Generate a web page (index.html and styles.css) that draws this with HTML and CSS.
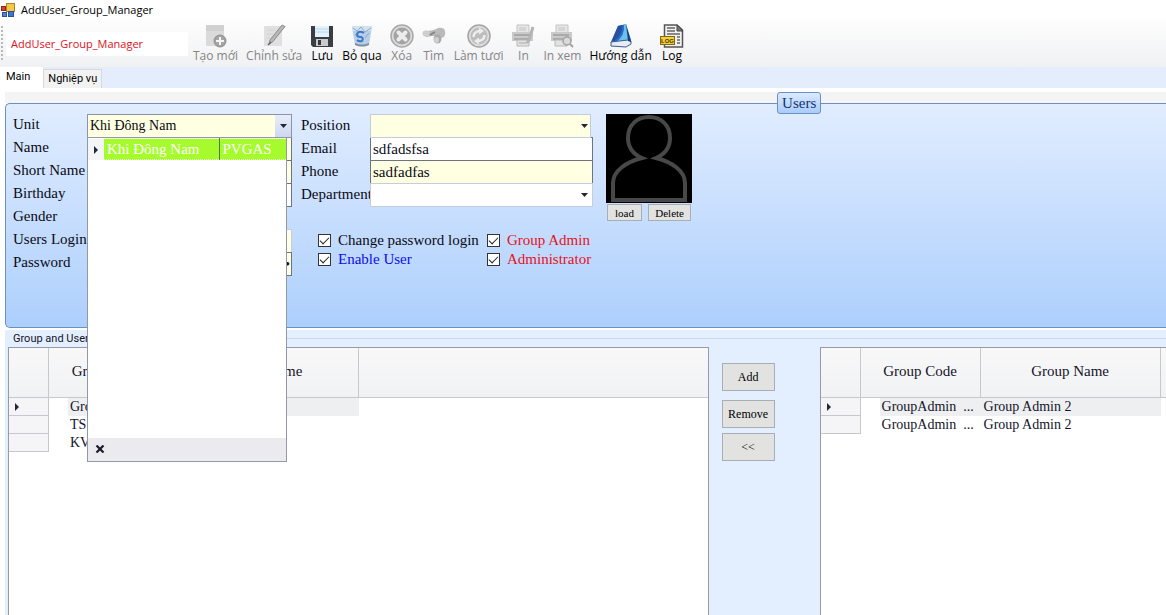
FILE: index.html
```html
<!DOCTYPE html>
<html lang="vi">
<head>
<meta charset="utf-8">
<title>AddUser_Group_Manager</title>
<link rel="stylesheet" href="styles.css">
</head>
<body>
<header class="titlebar">
  <svg class="app-icon" width="14" height="14" viewBox="0 0 14 14" aria-hidden="true">
    <rect x="5.5" y=".5" width="8" height="8" fill="#f6c843" stroke="#a8862c"/>
    <rect x=".5" y="3.5" width="4" height="4" fill="#d8402c" stroke="#96261a"/>
    <rect x="1.500" y="9.500" width="4" height="4" fill="#4c86dc" stroke="#2b5298"/>
    <rect x="7.500" y="8.500" width="5" height="5" fill="#3f74cf" stroke="#2b5298"/>
  </svg>
  <h1 class="app-title">AddUser_Group_Manager</h1>
</header>

<div class="toolbar" role="toolbar">
  <span class="grip"></span>
  <span class="form-name">AddUser_Group_Manager</span>
  <div class="tools">
    <button class="tool" type="button" disabled>
      <svg class="tool-icon" viewBox="0 0 24 24"><rect x="2" y="1" width="18" height="21" rx="1" fill="#dadada"/><rect x="2" y="1" width="18" height="6" fill="#d0d0d0"/><circle cx="16" cy="17" r="6.500" fill="#989898"/><circle cx="16" cy="17" r="5" fill="#a6a6a6"/><path d="M16 13v8M12 17h8" stroke="#f5f5f5" stroke-width="2"/></svg>
      <span>Tạo mới</span>
    </button>
    <button class="tool" type="button" disabled>
      <svg class="tool-icon" viewBox="0 0 24 24"><path d="M2 2h18v20H2z" fill="#e0e0e0"/><path d="M5 6h8M5 10h6M5 14h4" stroke="#d2d2d2"/><path d="M7 20l1-4L20 1l3 1.500L10.500 18z" fill="#b8b8b8" stroke="#8c8c8c"/><path d="M6 21l3-3" stroke="#666" stroke-width="1.500"/></svg>
      <span>Chỉnh sửa</span>
    </button>
    <button class="tool" type="button">
      <svg class="tool-icon" viewBox="0 0 24 24"><path d="M1 2h22v21H3l-2-2z" fill="#3a3d42"/><rect x="5" y="2" width="14" height="11" fill="#e3f2fc"/><path d="M5 5h14M5 8h14" stroke="#b9d8ee"/><rect x="6" y="15" width="12" height="7" fill="#c9cacc"/><rect x="8" y="16" width="3" height="5" fill="#33363b"/></svg>
      <span>Lưu</span>
    </button>
    <button class="tool" type="button">
      <svg class="tool-icon" viewBox="0 0 24 24"><path d="M2 3h20l-3 18q-7 3-14 0z" fill="#b7cfe6"/><path d="M2 2h20l-1 5H3z" fill="#d3e2ee"/><path d="M3 4l4 3 4-4 4 5 6-4M5 10l3 4M19 9l-4 5" stroke="#8aa9c6" fill="none"/><path d="M14 9q-5-3-7 1 0 3 4 3 3 1 1 4-3 1-5-1" stroke="#3a76cc" stroke-width="2" fill="none"/><path d="M5 19q7 3 14 0v2q-7 3-14 0z" fill="#83909e"/></svg>
      <span>Bỏ qua</span>
    </button>
    <button class="tool" type="button" disabled>
      <svg class="tool-icon" viewBox="0 0 24 24"><circle cx="12" cy="12" r="11" fill="#dcdcdc" stroke="#a8a8a8" stroke-width="1.500"/><circle cx="12" cy="12" r="8.500" fill="#a4a4a4"/><path d="M8.500 8.500l7 7M15.500 8.500l-7 7" stroke="#ececec" stroke-width="4" stroke-linecap="round"/></svg>
      <span>Xóa</span>
    </button>
    <button class="tool" type="button" disabled>
      <svg class="tool-icon" viewBox="0 0 24 24"><path d="M1 8q1-2 5-1l6-1 4-2q6-1 7 3 1 3-1 6l-3 1-6-2-3 0-6 1q-3-2-3-5z" fill="#bababa"/><ellipse cx="4" cy="9.500" rx="3.500" ry="3" fill="#cecece"/><ellipse cx="15.500" cy="15" rx="4" ry="4.500" fill="#aaa"/><ellipse cx="14.500" cy="16" rx="2.500" ry="3" fill="#cfcfcf"/><path d="M8 11l5-3" stroke="#858585" stroke-width="2"/></svg>
      <span>Tìm</span>
    </button>
    <button class="tool" type="button" disabled>
      <svg class="tool-icon" viewBox="0 0 24 24"><circle cx="12" cy="12" r="11" fill="#dedede" stroke="#a4a4a4" stroke-width="1.500"/><circle cx="12" cy="12" r="8.500" fill="#bdbdbd"/><path d="M6.500 13q0-5 6-6M17.500 11q0 5-6 6" stroke="#ededed" stroke-width="2.500" fill="none"/><path d="M12 3.500l5 3.500-5 3.500zM12 13.500L7 17l5 3.500z" fill="#ededed"/></svg>
      <span>Làm tươi</span>
    </button>
    <button class="tool" type="button" disabled>
      <svg class="tool-icon" viewBox="0 0 24 24"><path d="M6 1h12v9H6z" fill="#e6e6e6" stroke="#c4c4c4"/><path d="M8 4h7M8 6h7" stroke="#c4c4c4"/><path d="M1 8h21v9H1z" fill="#cacaca"/><path d="M3 11h16M3 15h16" stroke="#a0a0a0" stroke-width="1.500"/><path d="M6 16h12v6H6z" fill="#e2e2e2" stroke="#b8b8b8"/><path d="M8 19h8" stroke="#aaa"/><path d="M22 3l-4 13-2 3" stroke="#b4b4b4" stroke-width="3" fill="none"/></svg>
      <span>In</span>
    </button>
    <button class="tool" type="button" disabled>
      <svg class="tool-icon" viewBox="0 0 24 24"><path d="M6 1h12v9H6z" fill="#e6e6e6" stroke="#c4c4c4"/><path d="M8 4h7M8 6h7" stroke="#c4c4c4"/><path d="M1 8h21v9H1z" fill="#cacaca"/><path d="M3 11h16M3 15h16" stroke="#a0a0a0" stroke-width="1.500"/><path d="M5 16h12v6H5z" fill="#e2e2e2" stroke="#b8b8b8"/><circle cx="17" cy="17" r="4" fill="#dadada" stroke="#a2a2a2" stroke-width="1.500"/><path d="M20 20l3 3" stroke="#a2a2a2" stroke-width="2"/></svg>
      <span>In xem</span>
    </button>
    <button class="tool" type="button">
      <svg class="tool-icon" viewBox="0 0 24 24"><path d="M9 2l8-2 3 17-18 2z" fill="#2370c6"/><path d="M9 2l4-1q1 10-8 16l-3 1z" fill="#2a4fa0"/><path d="M15 1l2-1 3 16-13 2q9-6 8-17z" fill="#6cc0ee"/><path d="M2 18l17-2 3 1v3l-5 3-15-1z" fill="#e8edf3" stroke="#3a5f95"/><path d="M17 0l5 16v2l-3-1z" fill="#17427f"/></svg>
      <span>Hướng dẫn</span>
    </button>
    <button class="tool" type="button">
      <svg class="tool-icon" viewBox="0 0 24 24"><path d="M4.500 1H17l5.500 5v17h-18z" fill="#f0f0f0" stroke="#555" stroke-width="1.500"/><path d="M17 1v6h6z" fill="#777" stroke="#444"/><path d="M7 4h8M7 7h8M7 10h13M17 13h3M17 16h3M17 19h3" stroke="#666" stroke-width="1.500"/><rect x=".5" y="12.500" width="14" height="8" fill="#f4cf3a" stroke="#806710"/><text class="log-text" x="1" y="19">LOG</text></svg>
      <span>Log</span>
    </button>
  </div>
</div>

<nav class="tabs" role="tablist">
  <button class="tab tab-active" type="button" role="tab" aria-selected="true">Main</button>
  <button class="tab" type="button" role="tab" aria-selected="false">Nghiệp vụ</button>
</nav>

<main class="page">
  <section class="users" aria-labelledby="users-caption">
    <h2 class="users-caption" id="users-caption">Users</h2>
    <div class="users-body">
      <div class="fields fields-left">
        <label for="unit">Unit</label>
        <div class="combo combo-open">
          <select class="field cream" id="unit"><option>Khi Đông Nam</option></select>
          <span class="drop-button"><svg width="7" height="4" viewBox="0 0 7 4"><path d="M0 0h7L3.500 4z" fill="#24243a"/></svg></span>
          <div class="popup">
            <table class="popup-table">
              <tr><td class="popup-mark"><svg width="4" height="8" viewBox="0 0 4 8"><path d="M0 0l4 4-4 4z" fill="#24243a"/></svg></td><td class="popup-name">Khi Đông Nam</td><td class="popup-code">PVGAS</td></tr>
            </table>
            <div class="popup-footer"><button class="popup-close" type="button" aria-label="Close"><svg width="10" height="8" viewBox="0 0 10 8"><path d="M1.500.5l7 7M8.500.5l-7 7" stroke="#1b1b2c" stroke-width="2.200"/></svg></button></div>
          </div>
        </div>
        <label for="name">Name</label><input class="field cream" id="name" type="text">
        <label for="short">Short Name</label><input class="field cream" id="short" type="text">
        <label for="birthday">Birthday</label><input class="field" id="birthday" type="text">
        <label for="gender">Gender</label><select class="field gender" id="gender"><option></option></select>
        <label for="login">Users Login</label><input class="field cream pale" id="login" type="text">
        <label for="password">Password</label><input class="field cream password" id="password" type="password" value="aaaaaaaaaa">
      </div>

      <div class="column">
        <div class="fields fields-right">
          <label for="position">Position</label>
          <div class="combo combo-short"><select class="field cream pale" id="position"><option></option></select><svg class="caret" width="7" height="4" viewBox="0 0 7 4"><path d="M0 0h7L3.500 4z" fill="#24243a"/></svg></div>
          <label for="email">Email</label><input class="field" id="email" type="text" value="sdfadsfsa">
          <label for="phone">Phone</label><input class="field cream" id="phone" type="text" value="sadfadfas">
          <label for="department">Department</label>
          <div class="combo"><select class="field pale" id="department"><option></option></select><svg class="caret" width="7" height="4" viewBox="0 0 7 4"><path d="M0 0h7L3.500 4z" fill="#24243a"/></svg></div>
        </div>
        <div class="checks">
          <label class="check"><input type="checkbox" checked>Change password login</label>
          <label class="check red"><input type="checkbox" checked>Group Admin</label>
          <label class="check blue"><input type="checkbox" checked>Enable User</label>
          <label class="check red"><input type="checkbox" checked>Administrator</label>
        </div>
      </div>

      <div class="photo">
        <svg class="portrait" width="86" height="89" viewBox="0 0 86 89" role="img" aria-label="User photo">
          <rect width="86" height="89" fill="#000"/>
          <path d="M7 86V69C7 57 20 48 36 44C27 40 22 33 22 24C22 11 31 3 43 3S64 11 64 24C64 33 59 40 50 44C66 48 79 57 79 69V86z" fill="none" stroke="#484848" stroke-width="4"/>
        </svg>
        <div class="photo-buttons">
          <button class="button small-button" type="button">load</button>
          <button class="button small-button" type="button">Delete</button>
        </div>
      </div>
    </div>
  </section>

  <section class="groups">
    <h2 class="groups-caption">Group and Users</h2>
    <div class="groups-body">
      <div class="grid">
        <table class="grid-table">
          <colgroup><col class="c-mark"><col class="c-code"><col class="c-name"><col></colgroup>
          <thead><tr><th></th><th>Group Code</th><th>Group Name</th><th></th></tr></thead>
          <tbody>
            <tr class="selected"><td class="mark"><svg width="4" height="8" viewBox="0 0 4 8"><path d="M0 0l4 4-4 4z" fill="#24243a"/></svg></td><td class="code"><span>GroupAdmin  ...</span></td><td class="gname"></td><td></td></tr>
            <tr><td class="mark"></td><td class="code"><span>TS</span></td><td class="gname"></td><td></td></tr>
            <tr><td class="mark"></td><td class="code"><span>KV</span></td><td class="gname"></td><td></td></tr>
          </tbody>
        </table>
      </div>
      <div class="transfer">
        <button class="button add" type="button">Add</button>
        <button class="button" type="button">Remove</button>
        <button class="button" type="button">&lt;&lt;</button>
      </div>
      <div class="grid grid-right">
        <table class="grid-table">
          <colgroup><col class="c-mark"><col class="c-code"><col class="c-gname"><col></colgroup>
          <thead><tr><th></th><th>Group Code</th><th>Group Name</th><th></th></tr></thead>
          <tbody>
            <tr class="selected"><td class="mark"><svg width="4" height="8" viewBox="0 0 4 8"><path d="M0 0l4 4-4 4z" fill="#24243a"/></svg></td><td class="code"><span>GroupAdmin  ...</span></td><td class="gname">Group Admin 2</td><td></td></tr>
            <tr><td class="mark"></td><td class="code"><span>GroupAdmin  ...</span></td><td class="gname">Group Admin 2</td><td></td></tr>
          </tbody>
        </table>
      </div>
    </div>
  </section>
</main>
</body>
</html>
```
FILE: styles.css
```css
* { box-sizing: border-box; }

body {
  margin: 0;
  height: 100vh;
  overflow: hidden;
  display: flex;
  flex-direction: column;
  background: #fff;
  color: #14142a;
  font: 15px/18px "Liberation Serif", serif;
}

button, input, select { font: inherit; color: inherit; margin: 0; }
h1, h2 { margin: 0; font-weight: normal; }

.titlebar {
  display: flex;
  align-items: center;
  gap: 6px;
  height: 20px;
  padding-left: 1px;
}
.app-title { font: 11px/16px "Open Sans", sans-serif; color: #000; }

.toolbar {
  display: flex;
  align-items: center;
  height: 47px;
  background: linear-gradient(#fdfdfd, #f0f1f3);
  font: 12px/16px "Open Sans", sans-serif;
}
.grip {
  width: 2px;
  height: 36px;
  margin-left: 1px;
  background: repeating-linear-gradient(#b8b8b8 0 2px, transparent 2px 4px);
}
.form-name {
  width: 182px;
  margin-left: 3px;
  padding: 4px 5px;
  background: #fff;
  color: #e01020;
  font-size: 11px;
}
.tools { display: flex; gap: 8px; margin-left: 5px; }
.tool {
  display: flex;
  flex-direction: column;
  align-items: center;
  min-width: 24px;
  padding: 0;
  border: 0;
  background: none;
  color: #000;
  white-space: nowrap;
}
.tool:disabled { color: #858585; }
.tool-icon { width: 24px; height: 24px; }
.log-text { font: bold 6px "Liberation Sans", sans-serif; fill: #4a3905; }

.tabs {
  display: flex;
  align-items: flex-end;
  height: 21px;
  background: #e3edfb;
  font: 11px/16px Roboto, sans-serif;
}
.tab {
  height: 19px;
  padding: 1px 4px;
  border: 1px solid #d9d9d9;
  border-bottom: 0;
  background: #f2f2f2;
  color: #000;
}
.tab-active {
  height: 21px;
  padding: 0 13px 2px 6px;
  border: 0;
  background: #fff;
}

.page { flex: 1; display: flex; flex-direction: column; padding: 4px 0 0 5px; min-height: 0; }

.users { position: relative; padding-top: 11px; background: linear-gradient(#f4f4f4 11px, #fff 11px); }
.users-caption {
  position: absolute;
  top: 0;
  left: 66.5%;
  padding: 1px 4px;
  border: 1px solid #6c8fc4;
  border-radius: 3px;
  background: linear-gradient(#dbe9ff, #a9ccfb);
  color: #14326e;
  font-size: 15px;
}
.users-body {
  display: flex;
  padding: 10px 0 52px 7px;
  border: 1px solid #6c8fc4;
  border-right: 0;
  border-radius: 5px 0 0 5px;
  background: linear-gradient(#e1edff, #adcffc);
  color: #0a0a14;
}
.fields {
  display: grid;
  grid-auto-rows: 23px;
}
.fields > label { padding-top: 1px; white-space: nowrap; }
.fields-left { grid-template-columns: 74px 205px; }
.fields-right { grid-template-columns: 69px 223px; }
.fields-right > label { padding-top: 2px; }

.field {
  appearance: none;
  width: 100%;
  height: 24px;
  padding: 0 2px;
  border: 1px solid #6e7380;
  border-radius: 0;
  background: #fff;
  outline: 0;
}
.cream { background: #ffffe1; }
.pale { border-color: #c5cddd; }
.gender { visibility: hidden; }
.password { text-align: right; padding: 0 1px; }

.combo { position: relative; }
.combo-short { padding-right: 2px; }
.combo-open .field { border-color: #8c93a8; padding: 0 2px; font-size: 14px; }
.caret { position: absolute; right: 5px; top: 10px; }
.drop-button {
  position: absolute;
  right: 1px;
  top: 1px;
  width: 16px;
  height: 22px;
  display: grid;
  place-items: center;
  background: linear-gradient(#e8edfa, #cdd8f0);
  pointer-events: none;
}
.popup {
  position: absolute;
  z-index: 2;
  top: 23px;
  left: 0;
  width: 200px;
  height: 325px;
  display: flex;
  flex-direction: column;
  justify-content: space-between;
  border: 1px solid #9298a8;
  background: #fff;
}
.popup-table { width: 100%; border-collapse: collapse; table-layout: fixed; color: #fff; }
.popup-table td { height: 21px; padding: 0 3px; background: #a6fb2c; border: 1px dotted #e4fbc0; border-width: 1px 0; }
.popup-table .popup-mark { width: 16px; padding: 0 6px; background: #f4f5f7; border: 0; line-height: 8px; }
.popup-table .popup-name { width: 115px; border-right: 1px solid #56773c; }
.popup-footer { height: 23px; background: #ebebef; }
.popup-close { display: block; padding: 7px; border: 0; background: none; line-height: 8px; }
.popup-close svg { display: block; }

.column { padding-left: 9px; }
.checks {
  display: grid;
  grid-template-columns: 169px auto;
  justify-content: start;
  gap: 1px 0;
  padding: 25px 0 0 17px;
}
.check { display: flex; align-items: center; gap: 7px; white-space: nowrap; }
.check input {
  appearance: none;
  width: 13px;
  height: 13px;
  border: 1px solid #333;
  background: #fff;
  display: grid;
  place-items: center;
}
.check input:checked::after {
  content: "";
  width: 8px;
  height: 4px;
  border: solid #222;
  border-width: 0 0 1px 1px;
  transform: translateY(-1px) rotate(-45deg);
}
.red { color: #e8101c; }
.blue { color: #0c0cf0; }

.photo { margin-left: 13px; }
.portrait { display: block; }
.photo-buttons { display: flex; justify-content: space-between; padding: 1px; }
.button {
  border: 1px solid #a9adb5;
  background: #e2e2e1;
  color: #000;
}
.small-button { height: 17px; min-width: 35px; padding: 0 6px; font-size: 11px; line-height: 16px; }

.groups {
  flex: 1;
  display: flex;
  flex-direction: column;
  min-height: 0;
  margin-top: 2px;
  background: #e3eeff;
}
.groups-caption {
  display: flex;
  align-items: center;
  gap: 3px;
  height: 17px;
  padding-left: 8px;
  font: 11px/16px Roboto, sans-serif;
  color: #14142a;
}
.groups-caption::after { content: ""; flex: 1; height: 1px; background: #d3d9e4; }
.groups-body { flex: 1; display: flex; min-height: 0; padding-left: 3px; }

.grid {
  flex: 0 0 60.5%;
  overflow: hidden;
  border: 1px solid #979ba6;
  border-bottom: 0;
  background: #fff;
}
.grid-right { flex: 1; border-right: 0; }
.grid-table {
  width: 100%;
  table-layout: fixed;
  border-collapse: separate;
  border-spacing: 0;
}
.c-mark { width: 40px; }
.c-code { width: 120px; }
.c-name { width: 190px; }
.c-gname { width: 180px; }
.grid-table th {
  height: 50px;
  padding: 0 0 3px;
  border: 1px solid #c6c8cc;
  border-width: 0 1px 1px 0;
  background: linear-gradient(#f8f8f9, #f1f2f3);
  font-weight: normal;
}
.grid-table th:last-child { border-right: 0; }
.grid-table td { height: 18px; padding: 0; white-space: pre; font-size: 14px; line-height: 18px; }
.grid-table .mark { padding-left: 6px; background: #f5f5f7; border: 1px solid #c6c8cc; border-width: 0 1px 1px 0; line-height: 17px; }
.grid-table .mark svg { display: block; }
.code span { display: block; margin-left: 19px; padding-left: 2px; }
.grid-table .gname { padding-left: 3px; }
.selected .code span, .selected .gname { background: #eeeff0; }

.transfer {
  flex: 0 0 111px;
  display: flex;
  flex-direction: column;
  align-items: flex-start;
  padding: 16px 0 0 13px;
  gap: 5px;
}
.transfer .button { width: 53px; height: 28px; padding: 0; font-size: 12px; }
.transfer .add { margin-bottom: 4px; }
```
